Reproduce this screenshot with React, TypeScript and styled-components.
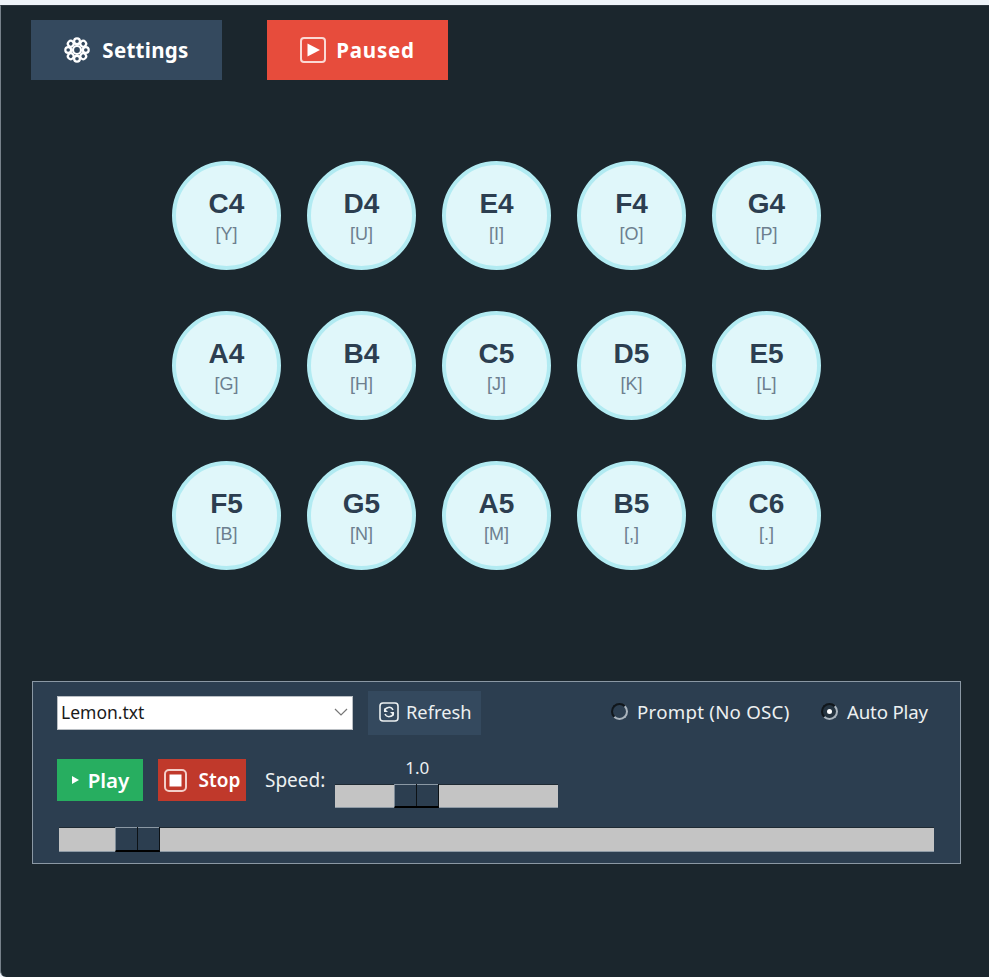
import React from 'react';
import styled, { createGlobalStyle } from 'styled-components';

const NOTES = [
  ['C4', 'Y'], ['D4', 'U'], ['E4', 'I'], ['F4', 'O'], ['G4', 'P'],
  ['A4', 'G'], ['B4', 'H'], ['C5', 'J'], ['D5', 'K'], ['E5', 'L'],
  ['F5', 'B'], ['G5', 'N'], ['A5', 'M'], ['B5', ','], ['C6', '.']
];

const UI_FONT = '"Noto Sans", "Open Sans", sans-serif';

const GlobalStyle = createGlobalStyle`
  html, body {
    margin: 0;
    padding: 0;
    background: #eef3f8;
  }

  * {
    box-sizing: border-box;
  }
`;

const Window = styled.div`
  width: 989px;
  height: 977px;
  padding-top: 5px;
  overflow: hidden;
`;

const Surface = styled.div`
  height: 972px;
  background: #1b262d;
  border-left: 1px solid #77818a;
  border-top: 1px solid #2b353d;
  border-bottom-left-radius: 6px;
  padding: 14px 0 0 30px;
`;

const Toolbar = styled.div`
  display: flex;
  gap: 45px;
`;

const TopButton = styled.div<{ $width: number; $bg: string; $gap: number; $spacing: number }>`
  display: flex;
  align-items: center;
  justify-content: center;
  gap: ${(p) => p.$gap}px;
  width: ${(p) => p.$width}px;
  height: 60px;
  background: ${(p) => p.$bg};
  color: #fff;
  font: 700 20.5px/1 ${UI_FONT};
  letter-spacing: ${(p) => p.$spacing}px;
`;

const KeyGrid = styled.div`
  display: grid;
  grid-template-columns: repeat(5, 109px);
  grid-auto-rows: 109px;
  column-gap: 26px;
  row-gap: 41px;
  margin: 81px 0 0 141px;
`;

const Key = styled.div`
  display: flex;
  flex-direction: column;
  align-items: center;
  padding-top: 25px;
  border-radius: 50%;
  background: #e0f7fa;
  border: 4px solid #b2ebf2;
  font-family: "Liberation Sans", Arial, sans-serif;
`;

const Note = styled.div`
  color: #2c3e50;
  font-size: 28px;
  font-weight: 700;
  line-height: 28px;
`;

const Binding = styled.div`
  color: #6d7f8f;
  font-size: 18px;
  line-height: 22px;
  margin-top: 5px;
`;

const Panel = styled.div`
  width: 929px;
  height: 183px;
  margin: 111px 0 0 1px;
  padding: 9px 0 0 24px;
  background: #2c3e50;
  border: 1px solid #8b98a4;
  color: #ecf0f1;
  font-family: ${UI_FONT};
`;

const SourceRow = styled.div`
  display: flex;
  align-items: center;
  height: 44px;
`;

const FileSelect = styled.div`
  display: flex;
  align-items: center;
  justify-content: space-between;
  width: 296px;
  height: 34px;
  padding: 0 4px 3px 3px;
  background: #fff;
  border: 1px solid #b9bec3;
  color: #1a1a1a;
  font-size: 17.5px;
`;

const RefreshButton = styled.div`
  display: flex;
  align-items: center;
  gap: 7px;
  width: 113px;
  height: 44px;
  margin-left: 15px;
  padding: 0 0 3px 11px;
  background: #34495e;
  font-size: 18.3px;
`;

const RadioGroup = styled.div`
  display: grid;
  grid-template-columns: 210px auto;
  margin-left: 130px;
  padding-bottom: 4px;
  font-size: 18.7px;
`;

const RadioLabel = styled.div<{ $spacing: number }>`
  display: flex;
  align-items: center;
  gap: 9px;
  letter-spacing: ${(p) => p.$spacing}px;
`;

const RadioDot = styled.span<{ $on?: boolean }>`
  position: relative;
  width: 17px;
  height: 17px;
  border-radius: 50%;
  border: 2px solid #aab4bd;
  border-top-color: #10161b;
  border-left-color: #10161b;
  background: ${(p) => (p.$on ? '#243340' : 'transparent')};

  &::after {
    content: '';
    display: ${(p) => (p.$on ? 'block' : 'none')};
    position: absolute;
    left: 4px;
    top: 4px;
    width: 5px;
    height: 5px;
    border-radius: 50%;
    background: #fff;
  }
`;

const TransportRow = styled.div`
  display: flex;
  align-items: flex-start;
  height: 68px;
  margin-top: 24px;
`;

const ActionButton = styled.div<{ $bg: string; $width: number; $gap: number; $size: number }>`
  display: flex;
  align-items: center;
  justify-content: center;
  gap: ${(p) => p.$gap}px;
  width: ${(p) => p.$width}px;
  height: 42px;
  margin-right: 15px;
  background: ${(p) => p.$bg};
  color: #fff;
  font-size: ${(p) => p.$size}px;
  font-weight: 600;
`;

const SpeedLabel = styled.div`
  margin: 7px 10px 0 4px;
  font-size: 19px;
  line-height: 28px;
`;

const SpeedColumn = styled.div`
  display: flex;
  flex-direction: column;
  align-items: flex-start;
  width: 223px;
  margin-top: -3px;
`;

const SpeedValue = styled.div`
  margin: 0 0 4px 70px;
  font-size: 17px;
  line-height: 24px;
`;

const Track = styled.div<{ $width: number; $height: number; $offset?: number }>`
  position: relative;
  width: ${(p) => p.$width}px;
  height: ${(p) => p.$height}px;
  margin-left: ${(p) => p.$offset || 0}px;
  background: #c4c4c4;
  border-top: 1px solid #1f2a33;
  border-bottom: 1px solid #8e9aa5;
`;

const Thumb = styled.div<{ $left: number }>`
  position: absolute;
  top: -1px;
  bottom: -1px;
  left: ${(p) => p.$left}px;
  display: grid;
  grid-template-columns: 1fr 1fr;
  column-gap: 1px;
  width: 45px;
  background: #0d1216;
  border-left: 1px solid #7f8c98;
  border-right: 1px solid #0d1216;
  border-bottom: 2px solid #000;
`;

const ThumbHalf = styled.div`
  background: #2c3e50;
  border-top: 1px solid #8b98a4;
`;

const GearIcon = () => (
  <svg width='26' height='26' viewBox='0 0 26 26' fill='none' stroke='#fff' strokeWidth='2.2'>
    <circle cx='13' cy='13' r='4' />
    {[0, 45, 90, 135, 180, 225, 270, 315].map((deg) => (
      <circle key={deg} cx='13' cy='4.2' r='2.9' transform={`rotate(${deg} 13 13)`} />
    ))}
  </svg>
);

const BoxedPlayIcon = () => (
  <svg width='26' height='26' viewBox='0 0 26 26'>
    <rect x='1' y='1' width='24' height='24' rx='3' fill='none' stroke='#fbd9d4' strokeWidth='2' />
    <path d='M7.5 6.5 L20 13 L7.5 19.5 Z' fill='#fff' />
  </svg>
);

const RefreshIcon = () => (
  <svg width='20' height='20' viewBox='0 0 20 20' fill='none' stroke='#ecf0f1'>
    <rect x='1' y='1' width='18' height='18' rx='3' strokeWidth='1.6' />
    <path d='M5.5 9 A4.5 4.5 0 0 1 14 8' strokeWidth='1.5' />
    <path d='M14.5 11 A4.5 4.5 0 0 1 6 12' strokeWidth='1.5' />
    <path d='M5 6 V10 H9 Z M15 14 V10 H11 Z' fill='#ecf0f1' stroke='none' />
  </svg>
);

const StopIcon = () => (
  <svg width='23' height='23' viewBox='0 0 23 23'>
    <rect x='1' y='1' width='21' height='21' rx='4' fill='none' stroke='#f3cfc9' strokeWidth='2' />
    <rect x='5.5' y='5.5' width='12' height='12' fill='#fff' />
  </svg>
);

const ChevronIcon = () => (
  <svg width='14' height='8' viewBox='0 0 14 8' fill='none' stroke='#777' strokeWidth='1.2'>
    <path d='M1 1 L7 7 L13 1' />
  </svg>
);

const PlayGlyph = () => (
  <svg width='9' height='10' viewBox='0 0 9 10'>
    <path d='M1 1 L8 5 L1 9 Z' fill='#fff' />
  </svg>
);

function Slider ({ width, height, left, offset }: { width: number; height: number; left: number; offset?: number }) {
  return (
    <Track $height={height} $offset={offset} $width={width}>
      <Thumb $left={left}>
        <ThumbHalf />
        <ThumbHalf />
      </Thumb>
    </Track>
  );
}

export default function App () {
  return (
    <Window>
      <GlobalStyle />
      <Surface>
        <Toolbar>
          <TopButton $bg='#34495e' $gap={12} $spacing={0.3} $width={191}>
            <GearIcon />
            Settings
          </TopButton>
          <TopButton $bg='#e74c3c' $gap={10} $spacing={0.8} $width={181}>
            <BoxedPlayIcon />
            Paused
          </TopButton>
        </Toolbar>
        <KeyGrid>
          {NOTES.map(([note, key]) => (
            <Key key={note}>
              <Note>{note}</Note>
              <Binding>[{key}]</Binding>
            </Key>
          ))}
        </KeyGrid>
        <Panel>
          <SourceRow>
            <FileSelect>
              Lemon.txt
              <ChevronIcon />
            </FileSelect>
            <RefreshButton>
              <RefreshIcon />
              Refresh
            </RefreshButton>
            <RadioGroup>
              <RadioLabel $spacing={0.25}>
                <RadioDot />
                Prompt (No OSC)
              </RadioLabel>
              <RadioLabel $spacing={-0.2}>
                <RadioDot $on />
                Auto Play
              </RadioLabel>
            </RadioGroup>
          </SourceRow>
          <TransportRow>
            <ActionButton $bg='#27ae60' $gap={8} $size={20.5} $width={86}>
              <PlayGlyph />
              Play
            </ActionButton>
            <ActionButton $bg='#c0392b' $gap={12} $size={19} $width={88}>
              <StopIcon />
              Stop
            </ActionButton>
            <SpeedLabel>Speed:</SpeedLabel>
            <SpeedColumn>
              <SpeedValue>1.0</SpeedValue>
              <Slider height={24} left={59} width={223} />
            </SpeedColumn>
          </TransportRow>
          <Slider height={25} left={56} offset={2} width={875} />
        </Panel>
      </Surface>
    </Window>
  );
}
